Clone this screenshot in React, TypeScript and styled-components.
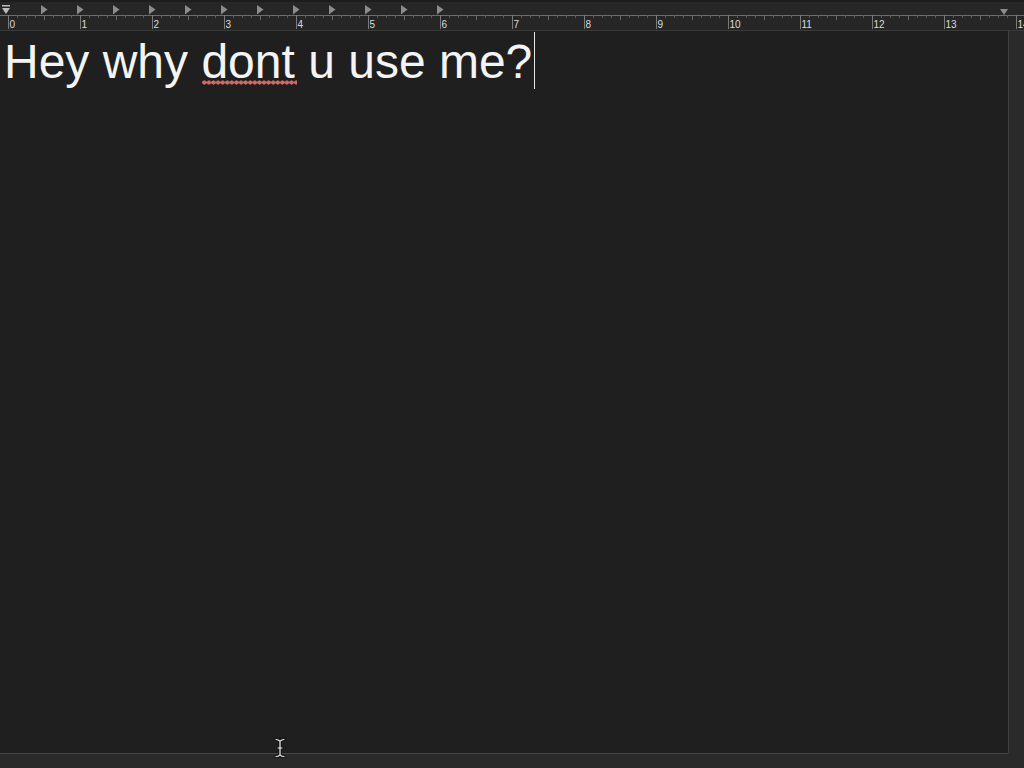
import React from "react";
import styled, { createGlobalStyle } from "styled-components";

const Global = createGlobalStyle`
  html, body { margin: 0; padding: 0; background: #2a2a2a; overflow: hidden; }
  #root { width: 1024px; height: 768px; }
`;

const Window = styled.div`
  position: relative;
  width: 1024px;
  height: 768px;
  display: flex;
  flex-direction: column;
  background: #2a2a2a;
`;

const RulerBar = styled.div`
  height: 30px;
  flex: none;
  background: #262626;
  border-bottom: 1px solid #3a3a3a;
  overflow: hidden;
`;

const Body = styled.div`
  flex: 1;
  display: flex;
  min-height: 0;
`;

const Column = styled.div`
  width: 1009px;
  display: flex;
  flex-direction: column;
`;

const Editor = styled.div`
  flex: 1;
  background: #1f1f1f;
  border-right: 1px solid #3e3e3e;
  padding: 3px 0 0 4px;
`;

const HScroll = styled.div`
  height: 14px;
  flex: none;
  border-top: 1px solid #454545;
  margin-right: 1px;
  background: #2a2a2a;
`;

const Gutter = styled.div`
  flex: 1;
  background: #2a2a2a;
`;

const Line = styled.div`
  font-family: "Liberation Sans", Arial, Helvetica, sans-serif;
  font-size: 48px;
  line-height: 56px;
  color: #f4f4f4;
  white-space: pre;
  display: flex;
  align-items: flex-start;
`;

const Misspelled = styled.span`
  position: relative;
  &::after {
    content: "";
    position: absolute;
    left: 1px;
    right: -2px;
    top: 46px;
    height: 5px;
    background-image: radial-gradient(circle, #d26a67 1.9px, transparent 2.3px);
    background-size: 4.6px 5px;
    background-repeat: repeat-x;
  }
`;

const Caret = styled.span`
  display: inline-block;
  width: 1px;
  height: 57px;
  margin-left: 2px;
  margin-top: -2px;
  background: #e8e8e8;
`;

const IBeam = styled.svg`
  position: absolute;
  left: 273px;
  top: 737px;
`;

const PPI = 72;
const X0 = 8;

function Ruler() {
  const ticks: React.ReactNode[] = [];
  for (let i = 0; i <= 14 * 8; i++) {
    const x = X0 + (i * PPI) / 8;
    if (x > 1024) break;
    if (i % 8 === 0) {
      ticks.push(<line key={"t" + i} x1={x + 0.5} x2={x + 0.5} y1={15} y2={29} stroke="#7a7a7a" strokeWidth={1} />);
    } else if (i % 4 === 0) {
      ticks.push(<line key={"t" + i} x1={x + 0.5} x2={x + 0.5} y1={15} y2={20} stroke="#6a6a6a" strokeWidth={1} />);
    } else {
      ticks.push(<line key={"t" + i} x1={x + 0.5} x2={x + 0.5} y1={15} y2={18} stroke="#5c5c5c" strokeWidth={1} />);
    }
  }
  const labels: React.ReactNode[] = [];
  for (let n = 0; n <= 14; n++) {
    const x = X0 + n * PPI;
    labels.push(
      <text key={"n" + n} x={x + 1.5} y={27.5} fill="#dcdcdc" fontSize={10} fontFamily="'Liberation Sans', Arial, sans-serif">
        {n}
      </text>
    );
  }
  const tabs: React.ReactNode[] = [];
  for (let k = 1; k <= 12; k++) {
    const x = X0 + k * 36;
    tabs.push(<polygon key={"tab" + k} points={`${x - 3},5 ${x + 3.5},9.5 ${x - 3},14.5`} fill="#8c8c8c" />);
  }
  return (
    <svg width={1024} height={30} viewBox="0 0 1024 30" style={{ display: "block" }}>
      <rect x={0} y={0} width={1024} height={2} fill="#1c1c1c" />
      <line x1={0} x2={1024} y1={15.5} y2={15.5} stroke="#6e6e6e" strokeWidth={1} />
      {ticks}
      {labels}
      {tabs}
      <rect x={2} y={5} width={8} height={1.5} fill="#bdbdbd" />
      <polygon points="2,8 10,8 6,14" fill="#bdbdbd" />
      <polygon points="1000,9 1008,9 1004,15" fill="#8c8c8c" />
    </svg>
  );
}

export default function App() {
  return (
    <>
      <Global />
      <Window>
        <RulerBar>
          <Ruler />
        </RulerBar>
        <Body>
          <Column>
            <Editor>
              <Line>
                <span>Hey why </span>
                <Misspelled>dont</Misspelled>
                <span> u use me?</span>
                <Caret />
              </Line>
            </Editor>
            <HScroll />
          </Column>
          <Gutter />
        </Body>
        <IBeam width={14} height={22} viewBox="0 0 14 22">
          <path d="M3 2.5 C5 2.5 6 3.2 7 4.2 C8 3.2 9 2.5 11 2.5 M7 4.2 V17.8 M3 19.5 C5 19.5 6 18.8 7 17.8 C8 18.8 9 19.5 11 19.5 M5 11 H9" stroke="#111" strokeWidth={3.2} fill="none" strokeLinecap="round" />
          <path d="M3 2.5 C5 2.5 6 3.2 7 4.2 C8 3.2 9 2.5 11 2.5 M7 4.2 V17.8 M3 19.5 C5 19.5 6 18.8 7 17.8 C8 18.8 9 19.5 11 19.5 M5 11 H9" stroke="#f2f2f2" strokeWidth={1.2} fill="none" strokeLinecap="round" />
        </IBeam>
      </Window>
    </>
  );
}
